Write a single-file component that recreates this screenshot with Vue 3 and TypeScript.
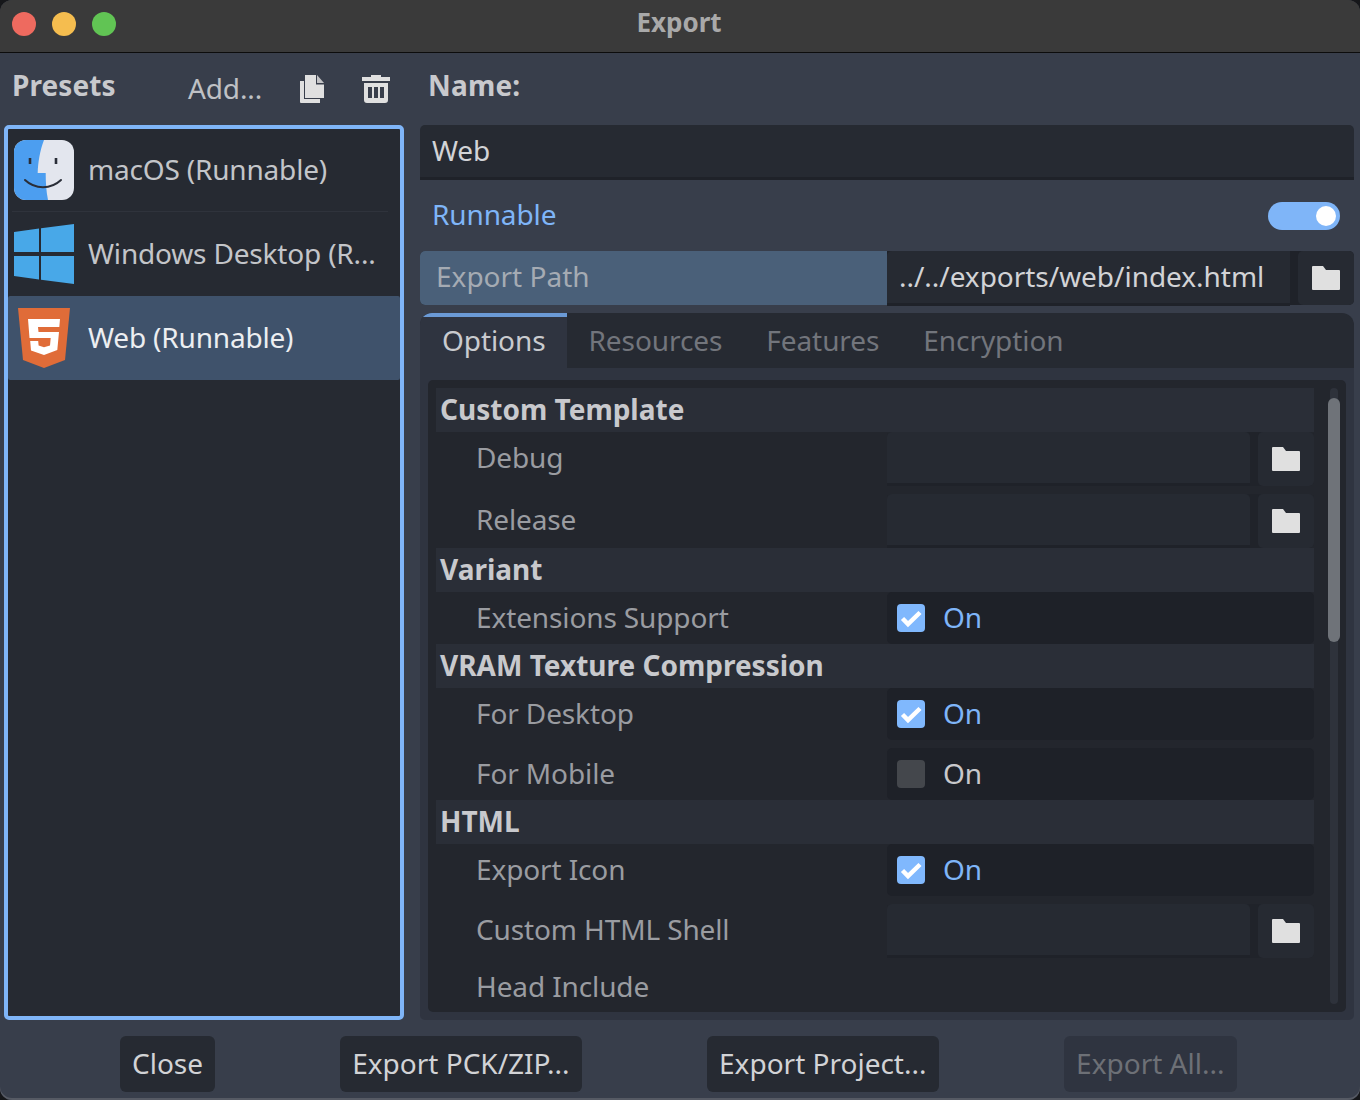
<template>
  <div class="window">
    <header class="titlebar">
      <span class="light red"></span>
      <span class="light yellow"></span>
      <span class="light green"></span>
      <span class="title">Export</span>
    </header>

    <main class="body">
      <section class="left">
        <div class="presets-head">
          <span class="presets-title">Presets</span>
          <span class="add">Add...</span>
          <svg class="tool-icon dup" width="24" height="28" viewBox="0 0 24 28">
            <path fill="#e0e0e0" d="M5 0h11v9.500h8V23H5z" />
            <path fill="#c4c4c6" d="M17 0l7 8h-7z" />
            <path fill="#e0e0e0" d="M0 6h4v18h16v4H1a1 1 0 0 1-1-1z" />
          </svg>
          <svg class="tool-icon trash" width="28" height="28" viewBox="0 0 28 28">
            <path fill="#e0e0e0" d="M9 0h10v2h9v4H0V2h9z" />
            <path fill="#e0e0e0" fill-rule="evenodd" d="M2 8h24v17a3 3 0 0 1-3 3H5a3 3 0 0 1-3-3zM6 12v11h4V12zM12 12v11h4V12zM18 12v11h4V12z" />
          </svg>
        </div>
        <div class="preset-list">
          <div class="preset">
            <svg class="preset-icon" width="60" height="60" viewBox="0 0 60 60">
              <rect width="60" height="60" rx="12" fill="#e3e6ee" />
              <path fill="#4c9ef0" d="M12 0h18c-4 10-6 23-6.300 33h8c0 9 .5 18 2.300 27H12A12 12 0 0 1 0 48V12A12 12 0 0 1 12 0z" />
              <path stroke="#2a2e38" stroke-width="2.600" fill="none" d="M16 18v6M42 18v6" />
              <path stroke="#2a2e38" stroke-width="2" fill="none" stroke-linecap="round" d="M11 40c10 9.500 26 9.500 36 0" />
            </svg>
            <span class="preset-name">macOS (Runnable)</span>
          </div>
          <div class="preset">
            <svg class="preset-icon" width="60" height="60" viewBox="0 0 60 60">
              <path fill="#48a8e8" d="M0 8l25-3.500V28H0zM27 4.200L60 0v28H27zM0 32h25v23.500L0 52zM27 32h33v28l-33-4.300z" />
            </svg>
            <span class="preset-name">Windows Desktop (R...</span>
          </div>
          <div class="preset selected">
            <svg class="preset-icon" width="60" height="60" viewBox="0 0 60 60">
              <path fill="#e06c38" d="M4 0h52l-5 52-21 8-21-8z" />
              <path fill="#fff" d="M14 11h32l-.7 8H24l.5 5H45l-1.700 18L30 47l-13-4.500-.8-9.500h8l.4 4.500 5.400 1.800 6-1.800.7-7.500H15.500z" />
            </svg>
            <span class="preset-name bright">Web (Runnable)</span>
          </div>
        </div>
      </section>

      <section class="right">
        <div class="name-label">Name:</div>
        <div class="name-input">Web</div>
        <div class="runnable-row">
          <span class="runnable">Runnable</span>
          <span class="toggle"><span class="knob"></span></span>
        </div>
        <div class="path-row">
          <span class="path-label">Export Path</span>
          <span class="path-input">../../exports/web/index.html</span>
          <span class="folder-btn main-folder">
            <svg width="28" height="24" viewBox="0 0 28 24"><path :d="folderPath" fill="#e0e0e0" /></svg>
          </span>
        </div>

        <div class="tabs">
          <span
            v-for="(tab, i) in tabs"
            :key="tab"
            class="tab"
            :class="{ active: i === 0 }"
          >{{ tab }}</span>
        </div>

        <div class="tab-panel">
          <div class="inner">
            <div class="options">
              <template v-for="row in rows" :key="row.label">
                <div v-if="row.kind === 'section'" class="section">{{ row.label }}</div>
                <div
                  v-else
                  class="row"
                  :class="[`row-${row.kind}`, { spaced: row.spaced, near: row.near }]"
                >
                  <span class="row-label">{{ row.label }}</span>
                  <div v-if="row.kind === 'check'" class="check-value">
                    <span class="check-box" :class="{ on: row.on }">
                      <svg v-if="row.on" width="28" height="28" viewBox="0 0 28 28">
                        <path d="M5.500 14.500l5.500 5.500L23 8.500" fill="none" stroke="#fff" stroke-width="4.500" />
                      </svg>
                    </span>
                    <span class="on-text" :class="{ on: row.on }">On</span>
                  </div>
                  <div v-else-if="row.kind === 'file'" class="file-value">
                    <span class="file-input"></span>
                    <span class="folder-btn">
                      <svg width="28" height="24" viewBox="0 0 28 24"><path :d="folderPath" fill="#e0e0e0" /></svg>
                    </span>
                  </div>
                </div>
              </template>
            </div>
            <div class="scrollbar"><span class="thumb"></span></div>
          </div>
        </div>
      </section>
    </main>

    <footer class="buttons">
      <span class="btn">Close</span>
      <span class="btn">Export PCK/ZIP...</span>
      <span class="btn">Export Project...</span>
      <span class="btn disabled">Export All...</span>
    </footer>
  </div>
</template>

<script setup lang="ts">
type Row = {
  kind: 'section' | 'file' | 'check' | 'text'
  label: string
  on?: boolean
  spaced?: boolean
  near?: boolean
}

const folderPath = 'M1 0h10l3 4h13a1 1 0 0 1 1 1v18a1 1 0 0 1-1 1H1a1 1 0 0 1-1-1V1a1 1 0 0 1 1-1z'

const tabs = ['Options', 'Resources', 'Features', 'Encryption']

const rows: Row[] = [
  { kind: 'section', label: 'Custom Template' },
  { kind: 'file', label: 'Debug', spaced: true },
  { kind: 'file', label: 'Release' },
  { kind: 'section', label: 'Variant' },
  { kind: 'check', label: 'Extensions Support', on: true },
  { kind: 'section', label: 'VRAM Texture Compression' },
  { kind: 'check', label: 'For Desktop', on: true, spaced: true },
  { kind: 'check', label: 'For Mobile', on: false },
  { kind: 'section', label: 'HTML' },
  { kind: 'check', label: 'Export Icon', on: true, spaced: true },
  { kind: 'file', label: 'Custom HTML Shell', near: true },
  { kind: 'text', label: 'Head Include' }
]
</script>

<style>
html,
body {
  margin: 0;
  background: #16171a;
}
</style>

<style scoped>
.window {
  width: 1360px;
  height: 1100px;
  box-sizing: border-box;
  border-radius: 12px;
  overflow: hidden;
  background: #383e4b;
  box-shadow: inset 0 -2px 0 #565a64;
  display: flex;
  flex-direction: column;
  font-family: "Noto Sans", sans-serif;
  font-size: 28px;
  letter-spacing: -0.12px;
  color: #c8c9cc;
  position: relative;
}

.titlebar {
  flex: none;
  background: #3a3a3a;
  border-bottom: 1px solid #0c0c0c;
  display: flex;
  align-items: center;
  position: relative;
  padding: 0 0 5px 12px;
  height: 47px;
  gap: 16px;
}

.light {
  width: 24px;
  height: 24px;
  border-radius: 50%;
}

.red { background: #ee6a5f; }
.yellow { background: #f5bd4f; }
.green { background: #61c454; }

.title {
  position: absolute;
  left: 0;
  right: 2px;
  top: 5px;
  text-align: center;
  font-size: 26px;
  line-height: 34px;
  font-weight: 700;
  letter-spacing: 0;
  color: #a9a9a9;
}

.body {
  flex: 1;
  display: flex;
  min-height: 0;
  padding: 0 6px 0 4px;
  gap: 16px;
}

.left {
  width: 400px;
  flex: none;
  display: flex;
  flex-direction: column;
}

.presets-head {
  height: 72px;
  flex: none;
  display: flex;
  align-items: center;
  padding-left: 8px;
}

.presets-title {
  font-weight: 700;
  letter-spacing: 0.1px;
  color: #c8c9cd;
  width: 176px;
  margin-top: -8px;
}

.add {
  width: 112px;
  color: #bfc1c5;
  margin-top: -2px;
}

.tool-icon {
  flex: none;
  margin-top: -1px;
}

.trash {
  margin-left: 38px;
}

.preset-list {
  height: 895px;
  box-sizing: border-box;
  border: 4px solid #7fb5f8;
  border-radius: 5px;
  background: #262a32;
}

.preset {
  height: 84px;
  display: flex;
  align-items: center;
  position: relative;
  padding-left: 6px;
  border-radius: 2px;
}

.preset:first-child {
  margin-top: -1px;
}

.preset:first-child::after {
  content: "";
  position: absolute;
  left: 4px;
  right: 12px;
  bottom: 0;
  height: 1px;
  background: #2f333c;
}

.preset.selected {
  background: #3f526b;
}

.preset-icon {
  flex: none;
}

.preset-name {
  margin: -2px 0 0 14px;
  white-space: nowrap;
  letter-spacing: -0.18px;
  color: #c3c5c9;
}

.preset-name.bright {
  color: #eceef1;
}

.right {
  flex: 1;
  min-width: 0;
  display: flex;
  flex-direction: column;
}

.name-label {
  height: 72px;
  flex: none;
  box-sizing: border-box;
  padding: 12px 0 0 8px;
  line-height: 40px;
  font-weight: 700;
  letter-spacing: 0.2px;
  color: #c8c9cd;
}

.name-input {
  height: 52px;
  flex: none;
  background: #262a32;
  border-bottom: 3px solid #1f2229;
  border-radius: 5px 5px 0 0;
  padding-left: 12px;
  line-height: 50px;
  color: #d2d3d6;
}

.runnable-row {
  height: 71px;
  flex: none;
  display: flex;
  align-items: center;
  justify-content: space-between;
  padding: 0 14px 0 12px;
}

.runnable {
  color: #7fb5f8;
  margin-top: -4px;
}

.toggle {
  width: 72px;
  height: 28px;
  border-radius: 14px;
  background: #7fb5f8;
  display: flex;
  align-items: center;
  justify-content: flex-end;
  padding-right: 4px;
  box-sizing: border-box;
}

.knob {
  width: 20px;
  height: 20px;
  border-radius: 50%;
  background: #fff;
}

.path-row {
  height: 54px;
  flex: none;
  display: flex;
  background: #1f2229;
  border-radius: 5px;
  margin-bottom: 8px;
}

.path-label {
  width: 467px;
  flex: none;
  box-sizing: border-box;
  background: #4a6079;
  color: #a5abb3;
  padding-left: 16px;
  line-height: 50px;
  letter-spacing: 0;
  border-radius: 5px 0 0 5px;
}

.path-input {
  width: 403px;
  flex: none;
  box-sizing: border-box;
  background: #262a32;
  border-bottom: 3px solid #1f2229;
  border-radius: 5px 0 0 0;
  padding-left: 12px;
  line-height: 50px;
  letter-spacing: -0.03px;
  color: #d2d3d6;
  white-space: nowrap;
  height: 55px;
}

.folder-btn {
  background: #262a32;
  border-radius: 5px;
  display: flex;
  align-items: center;
  justify-content: center;
  flex: none;
  width: 56px;
  height: 54px;
}

.main-folder {
  margin-left: 8px;
}

.tabs {
  height: 55px;
  flex: none;
  display: flex;
  background: #262a32;
  border-radius: 12px 12px 0 0;
  overflow: hidden;
  letter-spacing: -0.08px;
  color: #72757c;
}

.tab {
  box-sizing: border-box;
  padding: 4px 22px 0;
  line-height: 46px;
  white-space: nowrap;
}

.tab.active {
  background: #2f3440;
  border-top: 4px solid #6b9ad6;
  padding: 0 21px 0 22px;
  color: #c9cbcf;
}

.tab-panel {
  height: 652px;
  flex: none;
  background: #2f3440;
  box-sizing: border-box;
  padding: 12px 8px 8px;
  border-radius: 0 0 5px 5px;
}

.inner {
  height: 100%;
  background: #23262d;
  border-radius: 5px;
  box-sizing: border-box;
  padding: 8px 8px 0;
  display: flex;
  overflow: hidden;
}

.options {
  width: 878px;
  flex: none;
  overflow: hidden;
}

.section {
  height: 44px;
  background: #2a2e37;
  font-weight: 700;
  letter-spacing: 0;
  line-height: 42px;
  padding-left: 4px;
  color: #c8c9cd;
}

.row {
  height: 52px;
  display: flex;
}

.row-file {
  height: 54px;
}

.row.spaced {
  margin-bottom: 8px;
}

.row.near {
  margin-bottom: 3px;
}

.row-label {
  width: 451px;
  flex: none;
  box-sizing: border-box;
  padding-left: 40px;
  line-height: 50px;
  color: #9a9ca1;
  white-space: nowrap;
}

.check-value {
  flex: 1;
  background: #1e2128;
  border-radius: 5px;
  display: flex;
  align-items: center;
  padding-left: 10px;
}

.check-box {
  width: 28px;
  height: 28px;
  border-radius: 4px;
  background: #44474c;
  display: block;
  flex: none;
}

.check-box.on {
  background: #80b8fd;
}

.check-box svg {
  display: block;
}

.on-text {
  margin: -2px 0 0 18px;
  color: #c8c9cc;
}

.on-text.on {
  color: #7fb5f8;
}

.file-value {
  flex: 1;
  display: flex;
  justify-content: space-between;
  background: #20232a;
  border-radius: 5px;
}

.file-input {
  width: 363px;
  height: 54px;
  box-sizing: border-box;
  background: #262a32;
  border-bottom: 3px solid #1f2229;
  border-radius: 5px 5px 0 0;
}

.scrollbar {
  width: 8px;
  flex: none;
  margin: 0 0 8px 16px;
  background: #2e323b;
  border-radius: 4px;
  height: 616px;
  position: relative;
}

.thumb {
  position: absolute;
  left: -2px;
  top: 10px;
  width: 12px;
  height: 244px;
  background: #6f7379;
  border-radius: 6px;
}

.buttons {
  height: 80px;
  flex: none;
  box-sizing: border-box;
  padding: 16px 123px 0 120px;
  display: flex;
  justify-content: space-between;
  align-items: flex-start;
}

.btn {
  height: 56px;
  line-height: 55px;
  padding: 0 12.5px;
  background: #262a32;
  border-radius: 6px;
  letter-spacing: 0;
  color: #d2d3d6;
  white-space: nowrap;
}

.btn:first-child {
  padding: 0 12px;
}

.btn.disabled {
  background: #2f3440;
  color: #6d7076;
}
</style>
